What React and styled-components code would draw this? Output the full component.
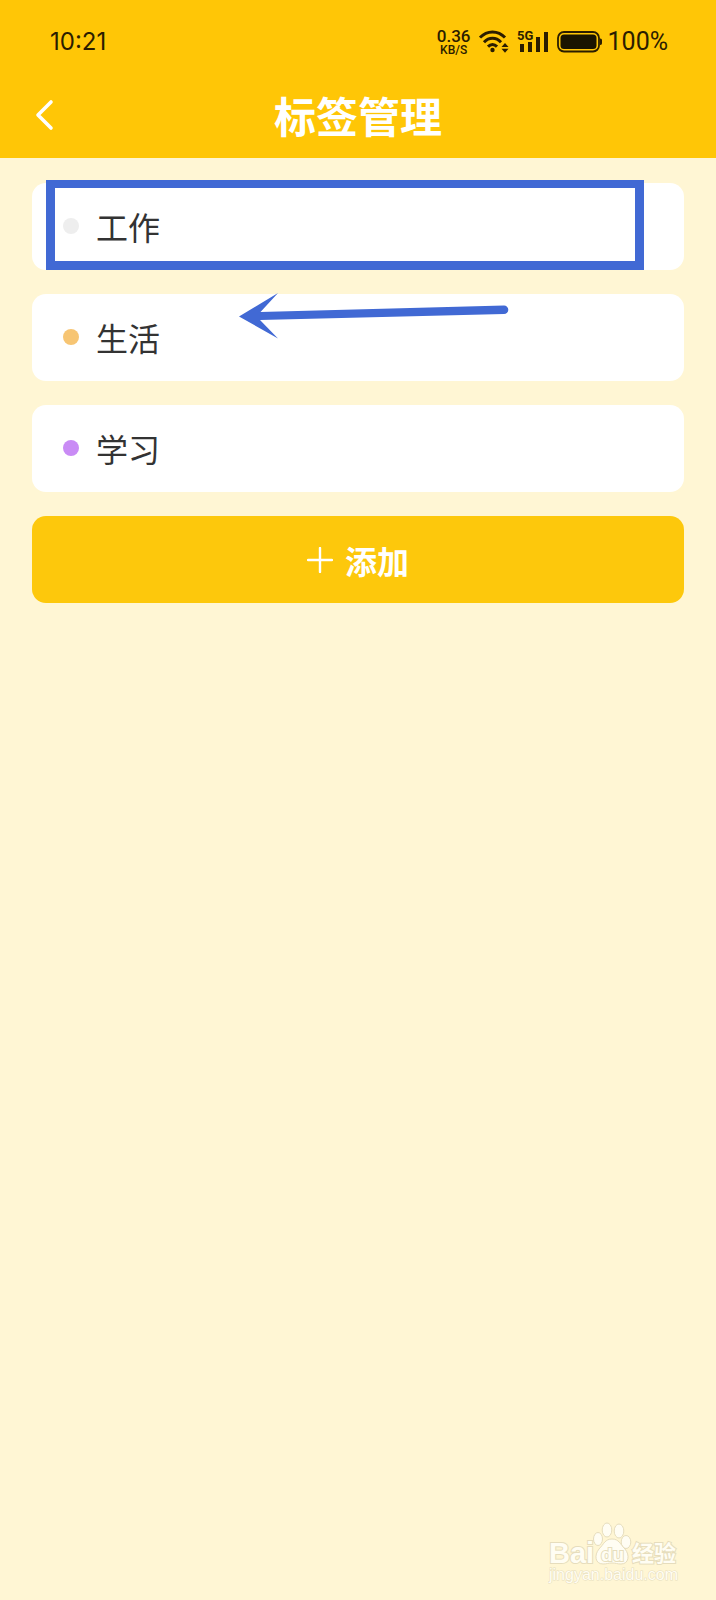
import React from "react";
import styled, { createGlobalStyle } from "styled-components";

const GlobalStyle = createGlobalStyle`
  * {
    box-sizing: border-box;
  }

  body {
    margin: 0;
    background: #fff6d4;
    font-family: "Noto Sans CJK SC", sans-serif;
  }
`;

const Screen = styled.div`
  width: 100%;
  min-height: 100vh;
  position: relative;
  background: #fff6d4;
`;

const Header = styled.header`
  background: #ffc606;
`;

const StatusBar = styled.div`
  height: 80px;
  padding: 4px 48px 0 50px;
  display: flex;
  align-items: center;
  justify-content: space-between;
  font-family: Inter, sans-serif;
  font-size: 24px;
  line-height: 28px;
  color: #2b1d00;
`;

const Time = styled.time`
  font-size: 24px;
`;

const StatusIcons = styled.div`
  display: flex;
  align-items: center;
  gap: 8px;
`;

const Battery = styled.div`
  display: flex;
  align-items: center;
  gap: 6px;
  font-family: Roboto, sans-serif;
  font-size: 25px;
`;

const Speed = styled.div`
  display: flex;
  flex-direction: column;
  align-items: center;
  font-family: Roboto, sans-serif;
  font-size: 17px;
  font-weight: 500;
  line-height: 16px;
`;

const SpeedUnit = styled.span`
  font-size: 12px;
  line-height: 12px;
`;

const TitleBar = styled.div`
  height: 78px;
  padding: 0 32px 8px;
  display: grid;
  grid-template-columns: 40px 1fr 40px;
  align-items: center;
`;

const BackButton = styled.button`
  width: 40px;
  height: 40px;
  padding: 0;
  display: flex;
  align-items: center;
  border: 0;
  background: none;
  color: #fff;
  cursor: pointer;
`;

const Title = styled.h1`
  margin: 0;
  text-align: center;
  font-size: 42px;
  font-weight: 700;
  line-height: 60px;
  color: #fff;
`;

const Content = styled.main`
  padding: 25px 32px;
  display: flex;
  flex-direction: column;
  gap: 24px;
`;

const TagList = styled.ul`
  margin: 0;
  padding: 0;
  display: flex;
  flex-direction: column;
  gap: 24px;
  list-style: none;
`;

const TagItem = styled.li`
  height: 87px;
  padding: 0 31px 1px;
  position: relative;
  display: flex;
  align-items: center;
  gap: 17px;
  border-radius: 14px;
  background: #fff;
  font-size: 32px;
  line-height: 48px;
  color: #333;
`;

const Dot = styled.span`
  width: 16px;
  height: 16px;
  border-radius: 50%;
  background: ${(props) => props.$color};
`;

const Highlight = styled.div`
  position: absolute;
  top: -3px;
  right: 40px;
  bottom: 0;
  left: 14px;
  border: 9px solid #4169d4;
  border-top-width: 8px;
`;

const Arrow = styled.svg`
  position: absolute;
  top: -2px;
  left: 206px;
`;

const AddButton = styled.button`
  height: 87px;
  padding: 0;
  display: flex;
  align-items: center;
  justify-content: center;
  gap: 12px;
  border: 0;
  border-radius: 14px;
  background: #fdc80c;
  font-family: inherit;
  font-size: 32px;
  font-weight: 700;
  line-height: 48px;
  color: #fff;
  cursor: pointer;
`;

const Watermark = styled.div`
  position: absolute;
  right: 36px;
  bottom: 14px;
  font-family: "Liberation Sans", "Noto Sans CJK SC", sans-serif;
  color: #fffdf3;

  & svg {
    display: block;
  }
`;

const tags = [
  { name: "工作", color: "#eeeeee", highlight: true },
  { name: "生活", color: "#f7c573", arrow: true },
  { name: "学习", color: "#c98bf5" },
];

const WifiIcon = () => (
  <svg width="30" height="24" viewBox="0 0 30 24" fill="none">
    <g stroke="currentColor" strokeWidth="3">
      <path d="M1 7.600C8 0 19 0 26 7.600" />
      <path d="M5 12.200c5-5.200 12-5.200 17 0" />
      <path d="M9 16.600c2.800-2.800 6.200-2.800 9 0" />
    </g>
    <circle cx="13.500" cy="20" r="2.200" fill="currentColor" />
    <path d="M22.500 17l3.500-3.900 3.500 3.900zM22.500 18.800h7L26 22.700z" fill="currentColor" />
  </svg>
);

const SignalIcon = () => (
  <svg width="32" height="30" viewBox="0 -3 32 30" fill="currentColor">
    <text x="0" y="10" fontSize="13" fontWeight="700" fontFamily="Roboto, sans-serif">
      5G
    </text>
    <path d="M3 14h4v8H3zM11 12h4v10h-4zM19 7h4v15h-4zM27 2h4v20h-4z" />
  </svg>
);

const BatteryIcon = () => (
  <svg width="45" height="22" viewBox="0 0 45 22" fill="none">
    <rect x="1" y="1" width="41" height="19.500" rx="6" stroke="currentColor" strokeWidth="1.8" />
    <rect x="3.500" y="3.500" width="36" height="14.500" rx="3.500" fill="#1a1400" />
    <path d="M43 7.500c2 0 2 1 2 3.300s0 3.300-2 3.300z" fill="currentColor" />
  </svg>
);

const BaiduLogo = () => (
  <svg width="132" height="64" viewBox="0 0 132 64" fill="currentColor">
    <g stroke="#e6ddbd" strokeWidth="1">
      <ellipse cx="50" cy="17" rx="4.500" ry="6.500" />
      <ellipse cx="59" cy="8" rx="4.800" ry="7" />
      <ellipse cx="71" cy="9" rx="4.800" ry="7" />
      <ellipse cx="78" cy="20" rx="4.800" ry="6.500" />
      <path d="M64 17c7 0 8 5 13 10 5 6 4 15-4 15-4 0-5-1-9-1s-5 1-9 1c-8 0-9-9-4-15 5-5 6-10 13-10z" />
    </g>
    <g stroke="#e6ddbd" strokeWidth="2" paintOrder="stroke">
      <text x="1" y="41" fontSize="29" fontWeight="700">Bai</text>
      <text x="53" y="39" fontSize="19" fontWeight="700">du</text>
      <text x="84" y="39" fontSize="22" fontWeight="700">经验</text>
      <text x="1" y="58" fontSize="16" strokeWidth="1">jingyan.baidu.com</text>
    </g>
  </svg>
);

export default () => {
  return (
    <Screen>
      <GlobalStyle />
      <Header>
        <StatusBar>
          <Time>10:21</Time>
          <StatusIcons>
            <Speed>
              <span>0.36</span>
              <SpeedUnit>KB/S</SpeedUnit>
            </Speed>
            <WifiIcon />
            <SignalIcon />
            <Battery>
              <BatteryIcon />
              <span>100%</span>
            </Battery>
          </StatusIcons>
        </StatusBar>
        <TitleBar>
          <BackButton aria-label="返回">
            <svg width="24" height="32" viewBox="0 0 24 32" fill="none">
              <path
                d="M19 3L6 16l13 13"
                stroke="currentColor"
                strokeWidth="3.6"
                strokeLinecap="round"
                strokeLinejoin="round"
              />
            </svg>
          </BackButton>
          <Title>标签管理</Title>
        </TitleBar>
      </Header>

      <Content>
        <TagList>
          {tags.map((tag) => (
            <TagItem key={tag.name}>
              <Dot $color={tag.color} />
              <span>{tag.name}</span>
              {tag.highlight && <Highlight />}
              {tag.arrow && (
                <Arrow width="272" height="48" viewBox="0 0 272 48">
                  <path
                    d="M1 24.500L40 1 22.500 20 266 13.500a4.300 4.300 0 0 1 0 8.600L22 28l18 18.500z"
                    fill="#4169d4"
                  />
                </Arrow>
              )}
            </TagItem>
          ))}
        </TagList>
        <AddButton>
          <svg width="26" height="26" viewBox="0 0 26 26" fill="none">
            <path d="M13 1v24M1 13h24" stroke="currentColor" strokeWidth="2.4" strokeLinecap="round" />
          </svg>
          添加
        </AddButton>
      </Content>

      <Watermark>
        <BaiduLogo />
      </Watermark>
    </Screen>
  );
};
